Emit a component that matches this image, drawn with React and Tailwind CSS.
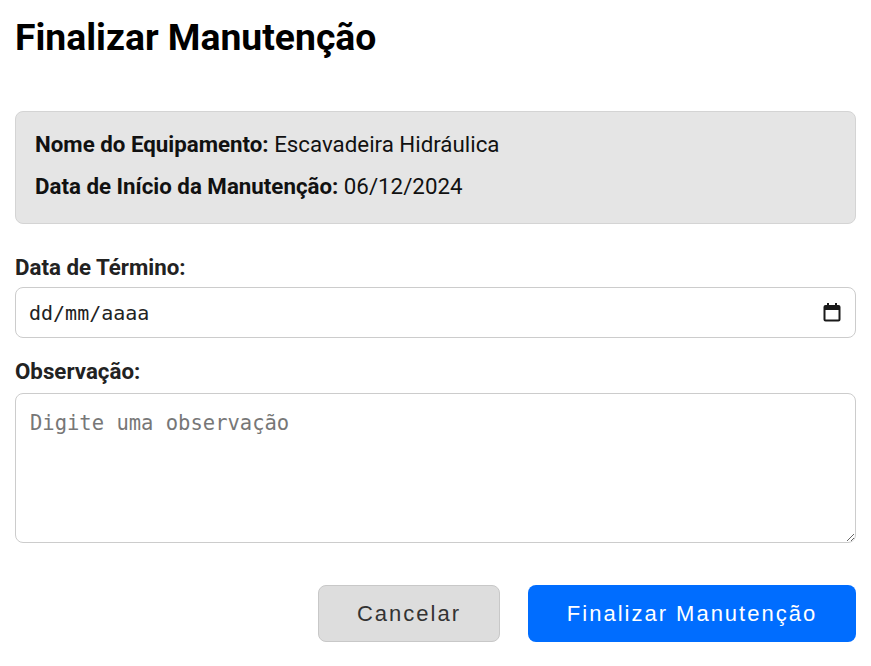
import { useState } from 'react';

function App() {
  const [endDate, setEndDate] = useState('');
  const [note, setNote] = useState('');

  return (
    <div className="min-h-screen bg-white px-[15px] pt-[15px] font-['Roboto',sans-serif] text-[#222]">
      <h1 className="text-[37.3px] font-bold leading-[44px] text-black">Finalizar Manutenção</h1>

      <section className="mt-[52px] bg-[#e5e5e5] border border-[#d4d4d4] rounded-lg px-[19px] pt-[19px] pb-[24px] flex flex-col gap-[16px] text-[22.3px] leading-[26px] text-[#111]">
        <p>
          <span className="font-bold">Nome do Equipamento:</span> Escavadeira Hidráulica
        </p>
        <p>
          <span className="font-bold">Data de Início da Manutenção:</span> 06/12/2024
        </p>
      </section>

      <form className="flex flex-col mt-[30px]" onSubmit={(e) => e.preventDefault()}>
        <label className="text-[22.3px] font-bold leading-[26px] text-[#222] mb-[7px]">Data de Término:</label>
        <div className="relative">
          <input
            type="text"
            value={endDate}
            onChange={(e) => setEndDate(e.target.value)}
            placeholder="dd/mm/aaaa"
            className="w-full h-[51px] border border-[#cccccc] rounded-lg pl-[13px] pr-[44px] text-[20px] font-['DejaVu_Sans_Mono',monospace] text-[#222] placeholder-[#222] outline-none"
          />
          {/* calendar glyph like the native picker */}
          <svg className="absolute right-[15px] top-[15px] w-[18px] h-[20px] pointer-events-none" viewBox="0 0 18 20" fill="none">
            <rect x="1.5" y="4" width="15" height="14.5" rx="1" stroke="#1a1a1a" strokeWidth="2" />
            <rect x="1.5" y="4" width="15" height="4" fill="#1a1a1a" />
            <rect x="4" y="1" width="2" height="4" fill="#1a1a1a" />
            <rect x="12" y="1" width="2" height="4" fill="#1a1a1a" />
          </svg>
        </div>

        <label className="text-[22.3px] font-bold leading-[26px] text-[#222] mt-[20px] mb-[9px]">Observação:</label>
        <textarea
          value={note}
          onChange={(e) => setNote(e.target.value)}
          placeholder="Digite uma observação"
          className="h-[150px] border border-[#cccccc] rounded-lg px-[14px] py-[15px] text-[20.5px] leading-[28px] font-['DejaVu_Sans_Mono',monospace] text-[#222] placeholder-[#777] outline-none"
        />

        <div className="flex justify-end gap-[28px] mt-[42px]">
          <button
            type="button"
            className="w-[182px] h-[57px] bg-[#dddddd] border border-[#c8c8c8] rounded-lg text-[22px] tracking-[2px] text-[#333] font-['Liberation_Sans',sans-serif]"
          >
            Cancelar
          </button>
          <button
            type="submit"
            className="w-[328px] h-[57px] bg-[#006dff] rounded-lg text-[22px] tracking-[2px] text-white font-['Liberation_Sans',sans-serif]"
          >
            Finalizar Manutenção
          </button>
        </div>
      </form>
    </div>
  );
}

export default App;
